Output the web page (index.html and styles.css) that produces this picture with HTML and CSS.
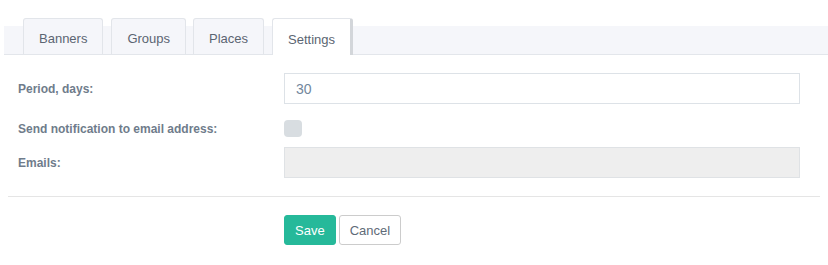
FILE: index.html
```html
<!DOCTYPE html>
<html lang="en">
<head>
  <meta charset="UTF-8" />
  <title>Banners - Settings</title>
  <link rel="stylesheet" href="styles.css">
</head>
<body>
  <div class="tabs">
    <div class="tab">Banners</div>
    <div class="tab">Groups</div>
    <div class="tab">Places</div>
    <div class="tab active">Settings</div>
  </div>

  <div class="content">
    <form class="settings-form" onsubmit="return false">
      <div class="row row-period">
        <label class="label" for="period">Period, days:</label>
        <input class="field" type="text" id="period" value="30">
      </div>
      <div class="row row-notify">
        <label class="label" for="notify">Send notification to email address:</label>
        <span class="checkbox" id="notify"></span>
      </div>
      <div class="row row-emails">
        <label class="label" for="emails">Emails:</label>
        <input class="field disabled" type="text" id="emails" disabled>
      </div>

      <div class="divider"></div>

      <div class="actions">
        <button class="btn btn-save">Save</button>
        <button class="btn btn-cancel">Cancel</button>
      </div>
    </form>
  </div>
</body>
</html>
```

FILE: styles.css
```css
* {
  box-sizing: border-box;
  font-family: Arial, "Liberation Sans", sans-serif;
}
body {
  margin: 0;
  padding: 0;
  background: #fff;
  color: #73879c;
}

/* tabs */
.tabs {
  display: flex;
  gap: 8px;
  margin: 18px 0 0 4px;
  padding-left: 19px;
  height: 37px;
  background: linear-gradient(to bottom, transparent 8px, #f5f6fa 8px);
  border-bottom: 1px solid #e3e6eb;
}
.tab {
  height: 36px;
  padding: 4px 15px 0;
  display: flex;
  align-items: center;
  font-size: 13px;
  color: #5b6572;
  background: #f5f6fa;
  border: 1px solid #e2e5ea;
  border-bottom: none;
  border-radius: 3px 3px 0 0;
}
.tab:nth-child(3) { margin-left: -1px; }
.tab.active {
  background: #fff;
  border-right: 3px solid #d3d6da;
  padding-right: 15px;
  height: 37px;
}

/* form */
.content { padding: 0 8px; }
.settings-form { padding-top: 18px; }
.row {
  display: flex;
  align-items: center;
}
.label {
  width: 276px;
  padding-left: 10px;
  font-size: 12px;
  font-weight: bold;
  color: #6f7c8b;
}
.field {
  width: 516px;
  height: 31px;
  padding: 0 11px;
  font-size: 14px;
  color: #73879c;
  border: 1px solid #dde2e7;
  border-radius: 0;
  outline: none;
}
.field.disabled { background: #eeeeee; border-color: #dfe2e5; }
.row-period { margin-bottom: 16px; }
.row-notify { height: 17px; margin-bottom: 10px; }
.checkbox {
  width: 18px;
  height: 17px;
  border-radius: 4px;
  background: #d8dde1;
}
.divider {
  height: 1px;
  background: #e5e5e5;
  margin: 18px 0 18px;
}
.actions { padding-left: 276px; display: flex; gap: 3px; }
.btn {
  height: 30px;
  padding: 0 10px;
  font-size: 13px;
  border-radius: 3px;
  cursor: pointer;
}
.btn-save {
  background: #26b99a;
  border: 1px solid #26b99a;
  color: #fff;
}
.btn-cancel {
  background: #fff;
  border: 1px solid #cccccc;
  color: #5f6b78;
}
```
